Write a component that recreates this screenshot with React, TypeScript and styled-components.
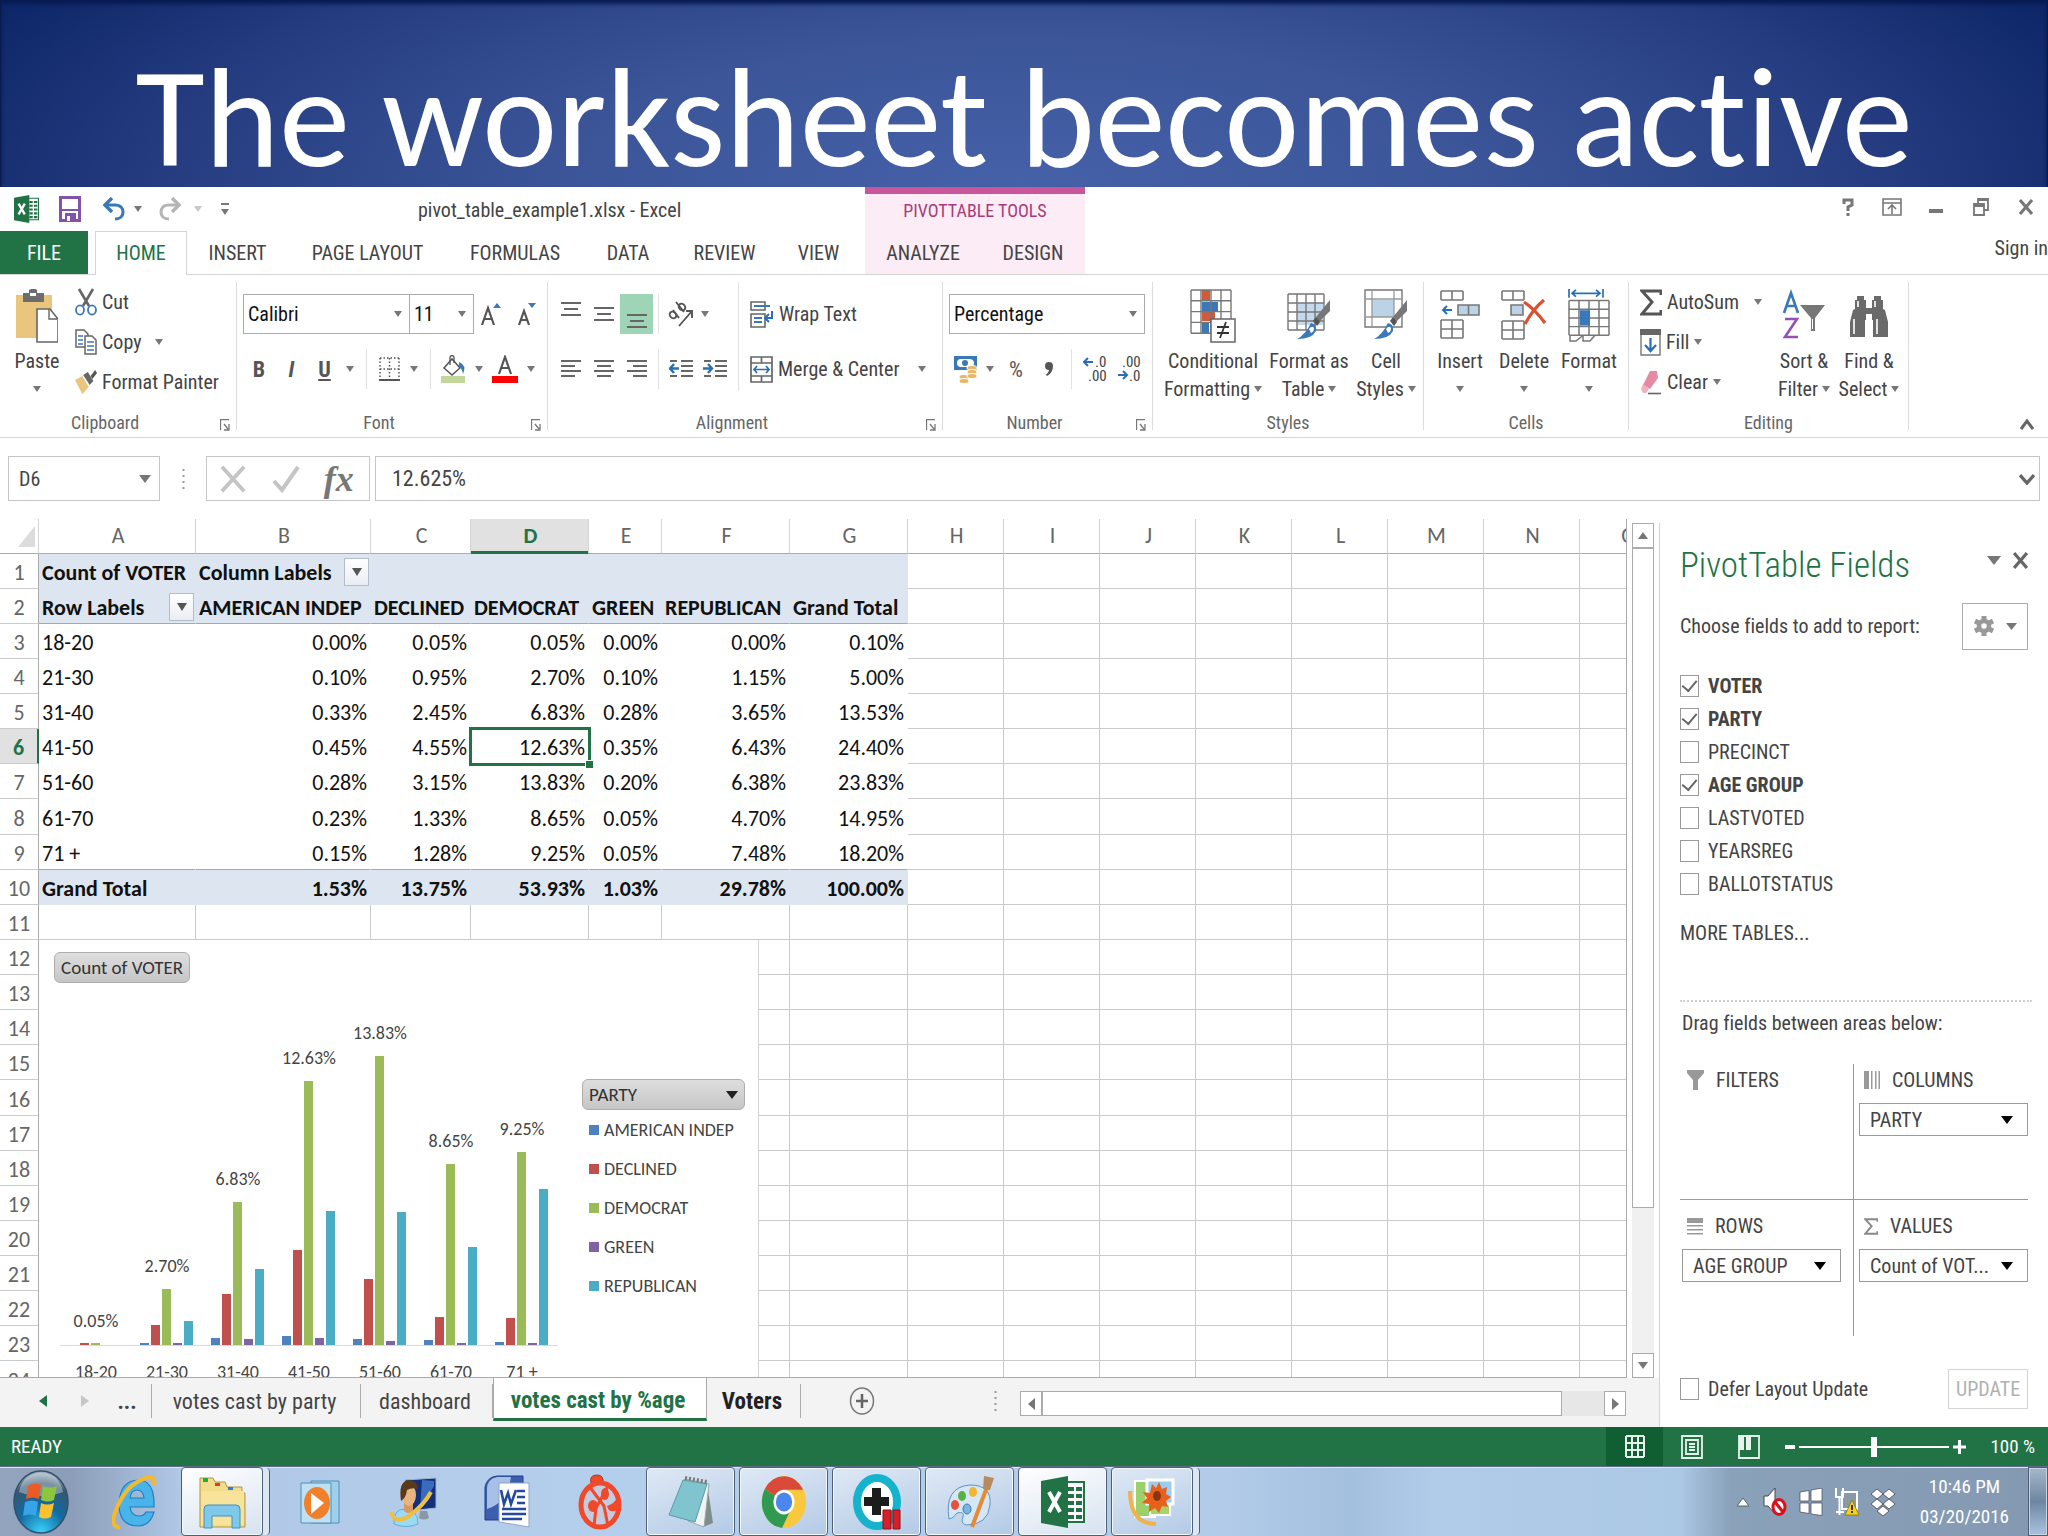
import React from "react";
import styled, { createGlobalStyle, css } from "styled-components";

const UI = `"Roboto Condensed", "Open Sans", "Noto Sans", sans-serif`;
const CAL = `Carlito, Lato, sans-serif`;
const GREEN = "#217346";
const GRAY = "#777";
const LINE = "#d4d4d4";
const GRID = "#cbcacd";

const Global = createGlobalStyle`
  * { box-sizing: border-box; }
  body { margin: 0; background: #fff; font-family: ${UI}; font-size: 20px; color: #444; overflow: hidden; font-variant-ligatures: none; }
  button, select, input { font: inherit; color: inherit; }
  button { background: none; border: 0; padding: 0; }
  svg { display: block; flex: none; }
`;

/* ---------- shell ---------- */
const Page = styled.div`
  display: flex; flex-direction: column; height: 100vh; min-height: 1000px;
`;
const Banner = styled.h1`
  margin: 0; padding: 49px 0 0; flex: none; text-align: center;
  font: 400 142px/138px ${CAL}; font-variant-ligatures: none; color: #fff; white-space: nowrap;
  border: solid #0a1a4c; border-width: 0 1px; box-shadow: inset 0 4px 4px #071a52;
  background: radial-gradient(ellipse 56% 200% at 50% 100%, #4561a8 0, #3c5599 40%, #253d80 75%, #0e2768 100%);
`;
const TitleBar = styled.header`
  display: grid; grid-template-columns: 418px 447px 220px 1fr; height: 44px; flex: none;
`;
const Quick = styled.div`
  display: flex; align-items: center; padding: 0 0 3px 12px;
`;
const IconButton = styled.button<{ $w?: number }>`
  display: flex; align-items: center; justify-content: center; width: ${p => p.$w ?? 24}px; height: 30px;
`;
const DocTitle = styled.div`line-height: 46px; font-size: 20px;`;
const ToolsLabel = styled.div`
  background: #fcecf5; border-top: 7px solid #c9559a; color: #a83c7a; text-align: center; line-height: 34px; font-size: 18px;
`;
const WinButtons = styled.div`
  display: flex; align-items: center; justify-content: flex-end; gap: 20px; padding: 0 12px 6px 0;
`;
const TabRow = styled.nav`
  display: flex; height: 44px; flex: none; border-bottom: 1px solid ${LINE};
`;
const Tab = styled.button<{ $w: number; $kind?: "file" | "on" | "tool" }>`
  width: ${p => p.$w}px; line-height: 43px; height: 44px; font-size: 20px; flex: none; border: 1px solid transparent; border-width: 1px 1px 0;
  ${p => p.$kind === "file" && css`background: ${GREEN}; color: #fff; margin-right: 7px; height: 43px;`}
  ${p => p.$kind === "on" && css`background: #fff; color: ${GREEN}; border-color: ${LINE};`}
  ${p => p.$kind === "tool" && css`background: #fcecf5; height: 43px;`}
`;
const SignIn = styled.a`
  margin-left: auto; color: #444; text-decoration: none; line-height: 34px; white-space: nowrap;
`;

/* ---------- ribbon ---------- */
const Ribbon = styled.div`
  display: flex; flex: none; padding: 7px 0; border-bottom: 1px solid ${LINE}; border-top: 0;
`;
const Group = styled.section<{ $w: number }>`
  width: ${p => p.$w}px; flex: none; display: flex; flex-direction: column; border-right: 1px solid #dcdcdc;
`;
const GroupBody = styled.div<{ $pad?: number }>`
  height: 134px; display: flex; padding-left: ${p => p.$pad ?? 0}px;
`;
const GroupName = styled.div<{ $launch?: boolean }>`
  position: relative; text-align: center; line-height: 14px; height: 14px; font-size: 18px; color: #666;
  padding-right: ${p => (p.$launch ? 26 : 0)}px;
  svg { position: absolute; right: 6px; top: 3px; }
`;
const Rows = styled.div<{ $w?: number; $rule?: boolean }>`
  display: flex; flex-direction: column; gap: 15px; padding-top: 12px; flex: none;
  ${p => p.$w && `width: ${p.$w}px;`}
  ${p => p.$rule && "border-right: 1px solid #e1e1e1; margin-bottom: 25px;"}
`;
const ToolRow = styled.div`
  display: flex; align-items: center; height: 40px; padding-left: 6px;
`;
const Tool = styled.button<{ $w: number; $on?: boolean }>`
  width: ${p => p.$w}px; height: 40px; flex: none; display: flex; align-items: center; justify-content: center;
  font-size: 22px; color: #555; background: ${p => (p.$on ? "#9fd5b7" : "none")};
`;
const Rule = styled.i<{ $w: number }>`
  width: ${p => p.$w}px; height: 40px; flex: none;
  background: linear-gradient(#e1e1e1, #e1e1e1) center / 1px 100% no-repeat;
`;
const Stack = styled.div<{ $w: number }>`width: ${p => p.$w}px; flex: none; display: flex; flex-direction: column;`;
const Line = styled.button<{ $gap?: number; $pad?: number }>`
  display: flex; align-items: center; gap: 5px; height: 40px; font-size: 20px; white-space: nowrap;
  padding-left: ${p => p.$pad ?? 0}px;
  svg:last-child:not(:first-child) { margin-left: ${p => p.$gap ?? 0}px; }
`;
const Big = styled.button<{ $w: number }>`
  width: ${p => p.$w}px; flex: none; height: 121px; padding-top: 7px; display: flex; flex-direction: column; align-items: center;
  line-height: 28px; font-size: 20px; white-space: nowrap; margin-right: 4px;
  & > svg { margin-bottom: 4px; }
  span { display: flex; align-items: center; gap: 4px; height: 28px; }
`;
const Combo = styled.label<{ $w: number }>`
  width: ${p => p.$w}px; height: 40px; flex: none; display: grid; align-items: center; border: 1px solid #ababab; margin-right: -1px;
  select { grid-area: 1 / 1; appearance: none; border: 0; background: none; outline: 0; width: 100%; height: 38px; padding: 0 4px; color: #111; font-size: 20px; }
  svg { grid-area: 1 / 1; justify-self: end; margin-right: 7px; pointer-events: none; }
`;
const Collapse = styled.button`margin: auto 14px 0 auto;`;

/* ---------- formula bar ---------- */
const FormulaBar = styled.div`
  display: grid; grid-template-columns: 152px 46px 164px 1fr; padding: 18px 8px; flex: none; height: 81px;
`;
const NameBox = styled.label`
  border: 1px solid #c6c6c6; display: flex; align-items: center; padding-right: 8px;
  input { border: 0; outline: 0; width: 100%; min-width: 0; padding: 0 10px; background: none; }
`;
const Dots = styled.div`display: grid; place-items: center;`;
const FxBox = styled.div`
  border: 1px solid #c6c6c6; display: flex; align-items: center; justify-content: space-around; padding: 0 4px 0 0;
  button { display: grid; place-items: center; width: 40px; height: 40px; }
`;
const FxMark = styled.em`font: italic 700 36px/36px "Liberation Serif", serif; color: #777;`;
const Formula = styled(NameBox)`
  margin-left: 5px; padding-right: 4px;
  input { padding: 0 16px; font-size: 22px; }
`;

/* ---------- workbook ---------- */
const Work = styled.main`display: flex; flex: 1; min-height: 0;`;
const Left = styled.div`flex: 1; min-width: 0; display: flex; flex-direction: column;`;
const SheetRow = styled.div`display: flex; flex: 1; min-height: 0;`;
const Sheet = styled.div`
  flex: 1; min-width: 0; position: relative; overflow: hidden; border-right: 1px solid #ababab; border-bottom: 1px solid #ababab;
`;
const Grid = styled.table`
  table-layout: fixed; border-collapse: separate; border-spacing: 0; width: 1676px;
  font: 400 22px/30px ${CAL}; color: #111;
  th, td { padding: 4px 3px 0; height: 35px; white-space: nowrap; overflow: visible; border: solid ${GRID}; border-width: 0 1px 1px 0; text-align: right; }
  tbody tr:nth-child(8n) > * { height: 36px; }
  thead th { height: 35px; padding: 0 2px 0 4px; text-align: center; font-weight: 400; color: #666; border-color: ${LINE}; border-bottom-color: #ababab; }
  tbody th { font-weight: 400; color: #666; text-align: center; padding: 4px 0 0; border-right-color: #ababab; }
`;
const ColHead = styled.th<{ $on: boolean }>`
  ${p => p.$on && css`&&& { background: #e1e1e1; color: ${GREEN}; font-weight: 700; box-shadow: inset 0 -2px ${GREEN}; border-bottom-color: ${GREEN}; }`}
`;
const RowHead = styled.th<{ $on: boolean }>`
  ${p => p.$on && css`&&& { background: #e1e1e1; color: ${GREEN}; font-weight: 700; border-right: 2px solid ${GREEN}; }`}
`;
const Cell = styled.td<{ $pivot?: "head" | "body"; $left?: boolean; $edge?: boolean; $on?: boolean }>`
  ${p => p.$pivot && css`&&& { border-color: transparent; }`}
  ${p => p.$pivot === "head" && css`&&& { background: #dde6f0; font-weight: 700; border-color: #dde6f0; }`}
  ${p => p.$edge && css`&&& { border-bottom-color: #8fadd3; }`}
  ${p => p.$left && css`&&& { text-align: left; }`}
  ${p => p.$on && css`&&& { position: relative; outline: 3px solid ${GREEN}; outline-offset: -1px; }`}
`;
const Handle = styled.i`
  position: absolute; right: -5px; bottom: -5px; width: 8px; height: 8px; background: ${GREEN}; border: solid #fff; border-width: 1px 0 0 1px;
`;
const WithFilter = styled.span`display: flex; justify-content: space-between; align-items: center;`;
const FilterButton = styled.button`
  width: 25px; height: 28px; display: grid; place-items: center; border: 1px solid #b4bccb; background: linear-gradient(#fff, #e9edf3); margin: -2px -2px 0 0;
`;
const ChartBox = styled.div`
  position: absolute; left: 39px; top: 421px; width: 720px; height: 460px; background: #fff; border-right: 1px solid ${LINE}; color: #444; font: 400 18px ${CAL};
`;
const ChartButton = styled.button`
  display: flex; align-items: center; justify-content: space-between; height: 31px; padding: 0 6px; border: 1px solid #adadad; border-radius: 6px;
  background: linear-gradient(#dedede, #c6c6c6); font: 400 19px ${CAL}; color: #333; white-space: nowrap;
`;
const ChartCorner = styled.div`position: absolute; left: 15px; top: 12px;`;
const Legend = styled.div`
  position: absolute; left: 543px; top: 139px; width: 163px;
  button { width: 100%; }
  ul { list-style: none; margin: 0; padding: 0 0 0 7px; }
  li { display: flex; align-items: center; gap: 5px; height: 39px; font-size: 18px; white-space: nowrap; }
`;
const Key = styled.i<{ $c: string }>`width: 10px; height: 10px; background: ${p => p.$c};`;
const Plot = styled.svg`position: absolute; left: 0; top: 0;`;
const VScroll = styled.div`
  width: 22px; margin: 4px 5px 0; display: flex; flex-direction: column; background: #f0f0f0;
`;
const ScrollButton = styled.button`
  border: 1px solid #ababab; background: #fff; display: grid; place-items: center; width: 22px; height: 25px; flex: none;
`;
const VThumb = styled.div`background: #fff; border: 1px solid #ababab; flex: 660 0 0;`;
const VRest = styled.div`flex: 145 0 0;`;

const SheetTabs = styled.div`
  display: flex; flex: none; height: 49px; background: #f4f3f4; padding-right: 33px; font-size: 22px;
`;
const NavButton = styled.button<{ $w: number; $pad?: number }>`
  width: ${p => p.$w}px; display: grid; place-items: center; color: ${GREEN}; height: 46px; flex: none; padding-left: ${p => p.$pad ?? 0}px;
`;
const SheetTab = styled.button<{ $w: number; $on?: boolean; $bold?: boolean }>`
  width: ${p => p.$w}px; height: 43px; flex: none; font-size: 22px; white-space: nowrap; padding: 3px 4px 0 0;
  background: linear-gradient(#ababab, #ababab) right 6px / 1px 34px no-repeat;
  ${p => p.$bold && css`font-weight: 700; color: #222; font-size: 23px;`}
  ${p => p.$on && css`background: #fff; color: ${GREEN}; font-weight: 700; font-size: 23px; padding-top: 6px; border-bottom: 3px solid ${GREEN}; margin-top: -1px; height: 44px; border-left: 1px solid #ababab; border-right: 1px solid #ababab;`}
`;
const HScroll = styled.div`
  flex: 1; display: flex; height: 25px; margin-top: 13px; background: #e8e7e8; 
`;
const HThumb = styled.div`background: #fff; border: 1px solid #ababab; flex: 521 0 0;`;
const HRest = styled.div`flex: 42 0 0;`;

/* ---------- pane ---------- */
const Pane = styled.aside`
  width: 389px; flex: none; margin-top: 4px; border-left: 1px solid ${LINE}; padding: 0 20px; display: flex; flex-direction: column; font-size: 20px;
`;
const PaneHead = styled.div`
  display: flex; align-items: center; height: 46px; margin-top: 20px; gap: 12px;
  h2 { margin: 0 auto 0 0; font: 300 35px/46px ${UI}; color: ${GREEN}; }
  svg { margin-bottom: 12px; }
`;
const PaneLine = styled.div`display: flex; align-items: center; justify-content: space-between; height: 48px; margin-top: 13px;`;
const GearButton = styled.button`
  border: 1px solid #ababab; width: 66px; height: 47px; display: flex; align-items: center; justify-content: center; gap: 12px;
`;
const Fields = styled.div`display: flex; flex-direction: column; margin-top: 19px;`;
const Check = styled.label<{ $bold?: boolean }>`
  display: flex; align-items: center; gap: 9px; height: 33px; font-weight: ${p => (p.$bold ? 700 : 400)};
  input { appearance: none; margin: 0; width: 19px; height: 22px; border: 1px solid #9a9a9a; background: #fff; flex: none; display: grid; place-items: center; }
  input:checked::before { content: ""; width: 7px; height: 12px; border: solid #666; border-width: 0 2px 2px 0; transform: rotate(40deg); margin-top: -4px; }
`;
const More = styled.a`color: #444; text-decoration: none; line-height: 30px; margin-top: 18px;`;
const Drag = styled.div`border-top: 2px dotted #d0d0d0; margin: 52px -4px 0 0; padding: 7px 2px 0; line-height: 28px;`;
const Areas = styled.div`
  display: grid; grid-template-columns: 174px 1fr; grid-template-rows: 136px 136px; margin: 27px 0 0 0;
`;
const Area = styled.div<{ $r?: boolean; $b?: boolean }>`
  border: solid #9a9a9a; border-width: 0 ${p => (p.$r ? 1 : 0)}px ${p => (p.$b ? 1 : 0)}px 0;
  padding: ${p => (p.$b ? 0 : 10)}px ${p => (p.$r ? 12 : 0)}px 0 ${p => (p.$r ? 2 : 5)}px;
`;
const AreaName = styled.div`display: flex; align-items: center; gap: 12px; height: 32px; padding-left: 5px; margin-bottom: 7px;`;
const Pill = styled.button`
  width: 100%; height: 33px; border: 1px solid #9a9a9a; background: #fff; display: flex; align-items: center; justify-content: space-between; padding: 0 14px 0 10px; white-space: nowrap;
`;
const PaneFoot = styled.div`display: flex; align-items: center; justify-content: space-between; margin: auto 0 18px;`;
const Update = styled.button`border: 1px solid ${LINE}; color: #b1b1b1; width: 80px; height: 40px;`;

/* ---------- status bar ---------- */
const Status = styled.footer`
  display: flex; align-items: center; height: 39px; flex: none; background: ${GREEN}; color: #fff; padding: 0 13px 0 11px; font-size: 19px;
`;
const Views = styled.div`margin-left: auto; display: flex;`;
const View = styled.button<{ $on?: boolean }>`
  width: 57px; height: 39px; display: grid; place-items: center; background: ${p => (p.$on ? "#0f5f32" : "none")};
`;
const Zoom = styled.label`
  display: flex; align-items: center; gap: 4px; margin: 0 24px 0 8px;
  input { appearance: none; width: 150px; height: 20px; margin: 0; background: linear-gradient(#fff, #fff) center / 100% 2px no-repeat; }
  input::-webkit-slider-thumb { appearance: none; width: 6px; height: 20px; background: #fff; }
`;

/* ---------- taskbar ---------- */
const Taskbar = styled.div`
  display: flex; height: 70px; flex: none; border-top: 1px solid #5e6d84; box-shadow: inset 0 1px #dbe7f4;
  background: linear-gradient(90deg, #93a5bf 0, #8b9db8 70px, #b0c8e6 180px, #b4cfec 30%, #b1cbe8 60%, #a4c0df 66%, #b0cce9 70%, #abc8e4 1680px, #8aa1ba 1730px, #8499b1 100%);
`;
const Start = styled.button`width: 82px; display: grid; place-items: center; margin-right: 6px;`;
const TaskButton = styled.button<{ $run?: boolean; $hot?: boolean; $pile?: boolean }>`
  width: 93px; display: grid; place-items: center; position: relative;
  ${p => p.$run && css`
    width: 89px; margin-right: 4px; border: 1px solid #4f6076; border-radius: 4px; box-shadow: inset 0 0 0 1px #f3f8fd;
    background: linear-gradient(160deg, ${p.$hot ? "#fff" : "#dfe9f5"}, ${p.$hot ? "#d5e2f0" : "#b3cae6"});`}
  ${p => p.$pile && css`
    width: 82px; margin-right: 11px;
    &::after { content: ""; position: absolute; right: -8px; top: 0; bottom: 0; width: 6px; border-right: 1px solid #4f6076; border-radius: 0 4px 4px 0; background: #dce7f4; }`}
`;
const Tray = styled.div`
  margin-left: auto; display: flex; align-items: center; gap: 12px;
`;
const Clock = styled.time`color: #fff; text-align: center; line-height: 30px; font-size: 19px; padding: 0 7px 0 13px;`;
const Peek = styled.button`width: 20px; align-self: stretch; border: 1px solid #4f6076; box-shadow: inset 0 0 0 1px #c5d3e2; background: linear-gradient(#a6b7ca, #6f86a1 50%, #a9c3df);`;

/* ---------- drawings ---------- */
const Ic = ({ w, h, vb, children }: { w: number; h: number; vb?: string; children: React.ReactNode }) => (
  <svg width={w} height={h} viewBox={vb ?? `0 0 ${w} ${h}`} preserveAspectRatio="none" fill="none" aria-hidden="true">{children}</svg>
);
const Caret = ({ c = GRAY, w = 8, h = 6 }: { c?: string; w?: number; h?: number }) => (
  <Ic w={w} h={h} vb="0 0 8 6"><path d="M0 0h8L4 6z" fill={c} /></Ic>
);
const Launcher = () => <Ic w={10} h={12}><path d="M.5 11V.5H9M4 5l4 5M9 5v6H4" stroke={GRAY} strokeWidth="1.3" /></Ic>;
const bars = (rows: [number, number, number][], c = "#666") => rows.map(([x, y, w], i) => <path key={i} d={`M${x} ${y}h${w}`} stroke={c} strokeWidth="2" />);

const ExcelLogo = ({ w, h }: { w: number; h: number }) => (
  <Ic w={w} h={h} vb="0 0 44 52">
    <path d="M24 6h19v40H24z" fill="#fff" stroke={GREEN} strokeWidth="2" />
    <path d="M27 11h6v4h-6zM35 11h6v4h-6zM27 18h6v4h-6zM35 18h6v4h-6zM27 25h6v4h-6zM35 25h6v4h-6zM27 32h6v4h-6zM35 32h6v4h-6zM27 39h6v4h-6zM35 39h6v4h-6z" fill={GREEN} />
    <path d="M0 5L27 0v52L0 47z" fill={GREEN} />
    <path d="M8 16l11 20M19 16L8 36" stroke="#fff" strokeWidth="4" />
  </Ic>
);
const SaveIcon = () => <Ic w={22} h={26}><path d="M1.5 1.5h19v23h-19z" stroke="#8552ab" strokeWidth="3" /><path d="M2 13h18v2H2zM6 17h11v8H6z" fill="#8552ab" /><path d="M8 20h3v5H8z" fill="#fff" /></Ic>;
const UndoIcon = ({ c, flip }: { c: string; flip?: boolean }) => (
  <Ic w={22} h={24}><g transform={flip ? "translate(22 0) scale(-1 1)" : undefined}><path d="M2 8h10c6 0 8 4 8 7 0 5-4 7-8 7" stroke={c} strokeWidth="3" /><path d="M9 1L2 8l7 7" stroke={c} strokeWidth="3.4" /></g></Ic>
);
const PasteIcon = () => (
  <Ic w={42} h={54}><path d="M0 6h36v43H0z" fill="#e9c57e" /><path d="M7 4h6V1q5-3 8 0v3h7v9H7z" fill="#6d6d6d" /><path d="M14 4h6v3h-6z" fill="#fff" /><path d="M21 20h13l8 10v23H21z" fill="#fff" stroke="#666" strokeWidth="1.6" /><path d="M33 20v10h8" stroke="#666" strokeWidth="1.4" /></Ic>
);
const CutIcon = () => <Ic w={22} h={28}><path d="M4 1l10 17M18 1L8 18" stroke="#666" strokeWidth="2.6" /><ellipse cx="5" cy="22" rx="4" ry="4.6" stroke="#3a78b8" strokeWidth="1.8" /><ellipse cx="17" cy="22" rx="4" ry="4.6" stroke="#3a78b8" strokeWidth="1.8" /></Ic>;
const CopyIcon = () => (
  <Ic w={22} h={26}><path d="M1 1h8l4 4v13H1z" fill="#fff" stroke="#666" strokeWidth="1.5" /><path d="M3 7h5M3 11h5M3 15h5" stroke="#3a78b8" strokeWidth="1.6" /><path d="M10 7h7l4 4v14H10z" fill="#fff" stroke="#666" strokeWidth="1.5" /><path d="M12 13h7M12 17h7M12 21h7" stroke="#3a78b8" strokeWidth="1.6" /></Ic>
);
const BrushIcon = () => <Ic w={22} h={25} vb="0 0 24 25"><path d="M0 10l8-4 7 11-7 7z" fill="#e9c57e" /><path d="M9 5l5-3 6 9-4 4z" fill="#666" /><path d="M17 6l5-6 2 3-5 6z" fill="#555" /></Ic>;
const BordersIcon = () => <Ic w={21} h={24}><path d="M1 1h19M1 12h19M1 1v20M10.500 1v20M20 1v20" stroke="#555" strokeWidth="1.500" strokeDasharray="1.500 2" /><path d="M0 23h21" stroke="#555" strokeWidth="2" /></Ic>;
const BucketIcon = () => <Ic w={26} h={28}><path d="M0 21h24v7H0z" fill="#c3d69b" /><path d="M3 13l8-9 8 9-8 7z" fill="#fff" stroke="#555" strokeWidth="1.500" /><path d="M9 10V2q2-3 4 0v6" stroke="#555" strokeWidth="1.300" /><path d="M18 7q8 3 4 12-1-6-4-7z" fill="#3a78b8" /></Ic>;
const FontColor = () => <Ic w={26} h={28}><path d="M0 21h26v7H0z" fill="#f00" /><path d="M7 19l6-17 6 17M9 13h8" stroke="#555" strokeWidth="2.200" /></Ic>;
const SizeIcon = ({ down }: { down?: boolean }) => (
  <Ic w={22} h={26}><path d={down ? "M4 24l5-14 5 14M6 19h6" : "M2 24L8 7l6 17M4 18h8"} stroke="#555" strokeWidth="2.200" /><path d={down ? "M13 2h8l-4 5z" : "M13 7h8l-4-5z"} fill="#3a78b8" /></Ic>
);
const AngleIcon = () => <Ic w={26} h={28}><g stroke="#555" strokeWidth="1.900"><ellipse cx="5" cy="15" rx="3" ry="3.600" transform="rotate(-45 5 15)" /><path d="M5 10l6 8M8 2l8 10" /><ellipse cx="14" cy="7" rx="3" ry="3.600" transform="rotate(-45 14 7)" /><path d="M11 26L24 11M24 18v-7h-6" /></g></Ic>;
const IndentIcon = ({ right }: { right?: boolean }) => (
  <Ic w={24} h={20}>{bars([[1, 2, 7], [12, 2, 12], [12, 7, 12], [12, 12, 12], [1, 17, 7], [12, 17, 12]])}<path d={right ? "M0 9.500h9M5 5l4 4.500L5 14" : "M10 9.500H1M5 5L1 9.500 5 14"} stroke="#2a6fb5" strokeWidth="2.400" /></Ic>
);
const WrapIcon = () => <Ic w={24} h={27}><path d="M1 1h14v8H1zM1 13h14v13H1z" stroke="#666" strokeWidth="1.600" /><path d="M4 5h16M4 17h8M4 21h8" stroke="#3a78b8" strokeWidth="1.800" /><path d="M22 10v7h-6M19 13l-4 4 4 4" stroke="#2a6fb5" strokeWidth="2" /></Ic>;
const MergeIcon = () => <Ic w={23} h={27}><path d="M1 1h21v25H1zM1 7h21M1 20h21M11.500 1v6M11.500 20v6" stroke="#666" strokeWidth="1.700" /><path d="M4 13.500h15M7 10l-3 3.500L7 17M16 10l3 3.500-3 3.500" stroke="#2a6fb5" strokeWidth="1.700" /></Ic>;
const MoneyIcon = () => <Ic w={26} h={29}><path d="M1 1h23v14H1z" fill="#3a78b8" /><path d="M4 8q0-4 4-4h8q5 0 5 4t-5 4H8q-4 0-4-4z" fill="#fff" /><circle cx="12" cy="8" r="3" fill="#3a78b8" /><g fill="#e9b765" stroke="#fff"><ellipse cx="19" cy="13" rx="5" ry="2.500" /><ellipse cx="19" cy="17" rx="5" ry="2.500" /><ellipse cx="11" cy="22" rx="5" ry="2.500" /><ellipse cx="19" cy="21" rx="5" ry="2.500" /><ellipse cx="11" cy="26" rx="5" ry="2.500" /></g></Ic>;
const Decimal = ({ more }: { more?: boolean }) => (
  <svg width="24" height="28" viewBox="0 0 24 28" fill="#444" fontFamily={UI} fontSize="15" aria-hidden="true">
    <text x={more ? 12 : 5} y="12">{more ? ".0" : ".00"}</text><text x={more ? 5 : 12} y="26">{more ? ".00" : ".0"}</text>
    <path d={more ? "M10 7H1M5 3L1 7l4 4" : "M1 20h9M6 16l4 4-4 4"} fill="none" stroke="#2a6fb5" strokeWidth="2" />
  </svg>
);
const gridPath = (x: number, y: number, cw: number, ch: number, c: number, r: number) => {
  let d = "";
  for (let i = 0; i <= c; i++) d += `M${x + i * cw} ${y}v${ch * r}`;
  for (let j = 0; j <= r; j++) d += `M${x} ${y + j * ch}h${cw * c}`;
  return d;
};
const CondIcon = () => (
  <Ic w={46} h={54}><path d="M1 1h40v43H1z" fill="#fff" /><path d="M12 1h8v11h-8zM12 23h13v9H12z" fill="#d05b3b" /><path d="M12 13h16v9H12zM12 34h7v10h-7z" fill="#3a78b8" /><path d={gridPath(1, 1, 10, 10.8, 4, 4)} stroke="#777" strokeWidth="1.400" /><path d="M21 30h24v23H21z" fill="#fff" stroke="#666" strokeWidth="1.500" /><path d="M27 38h12M27 44h12M36 33l-6 16" stroke="#333" strokeWidth="1.800" /></Ic>
);
const brush = <><path d="M43 11v11L32 33l-3-5z" fill="#777" /><path d="M29 28l4 5-3 4-4-5z" fill="#555" /><path d="M24 34q6 1 5 8-4 8-19 8 8-4 14-16z" fill="#3a78b8" /><path d="M22 40q3-4 5-1 0 4-3 5z" fill="#fff" /></>;
const TableIcon = () => <Ic w={44} h={54}><path d="M10 14h26v22H10z" fill="#c5d9ee" /><path d={gridPath(1, 5, 9, 9, 4, 4)} stroke="#777" strokeWidth="1.400" />{brush}</Ic>;
const StyleIcon = () => <Ic w={44} h={54}><path d="M1 1h37v37H1z" fill="#fff" stroke="#777" strokeWidth="1.400" /><path d="M8 11h22v17H8z" fill="#bcd3e6" /><path d="M8 1v37M30 1v27M1 10h37M1 28h28" stroke="#999" strokeWidth="1.300" />{brush}</Ic>;
const InsertIcon = () => <Ic w={40} h={54}><path d={gridPath(1, 2, 11, 9, 2, 1) + gridPath(1, 31, 11, 9, 2, 2)} stroke="#777" strokeWidth="1.600" /><path d="M18 16h21v10H18zM28.500 16v10" fill="#bcd3e6" stroke="#777" strokeWidth="1.600" /><path d="M12 21H3M7 17l-4 4 4 4" stroke="#2a6fb5" strokeWidth="2" /></Ic>;
const DeleteIcon = () => <Ic w={46} h={54}><path d={gridPath(1, 2, 11, 9, 2, 1) + gridPath(1, 32, 11, 9, 2, 2)} stroke="#777" strokeWidth="1.600" /><path d="M10 16h12v10H10z" fill="#bcd3e6" stroke="#777" strokeWidth="1.600" /><path d="M23 13q10 6 21 21M43 11Q32 20 24 35" stroke="#d8532e" strokeWidth="3.200" /></Ic>;
const FormatIcon = () => <Ic w={42} h={54} vb="0 0 42 56"><path d="M1 0v9M35 0v9M4 4.500h28M8 1L4 4.500 8 8M28 1l4 3.500L28 8" stroke="#2a6fb5" strokeWidth="1.700" /><path d={gridPath(1, 12, 10, 9, 4, 4)} stroke="#777" strokeWidth="1.500" /><path d="M12 22h10v16H12z" fill="#3a78b8" /><path d="M2 48v6h6l6-5M15 48v6h7l5-6" stroke="#777" strokeWidth="1.500" /></Ic>;
const SigmaIcon = ({ w = 22, h = 27, c = "#555" }: { w?: number; h?: number; c?: string }) => <Ic w={w} h={h} vb="0 0 22 27"><path d="M21 6V2H2l10 11L2 25h19v-4" stroke={c} strokeWidth="3" /></Ic>;
const FillIcon = () => <Ic w={21} h={27}><path d="M1 1h19v25H1z" fill="#fff" stroke="#777" strokeWidth="1.400" /><path d="M0 0h21v6H0z" fill="#666" /><path d="M10.500 9v13M5 16l5.500 6 5.500-6" stroke="#2a6fb5" strokeWidth="2.200" /></Ic>;
const ClearIcon = () => <Ic w={22} h={25}><path d="M10 1h7l1 7-8 11-7-4z" fill="#e58aa3" /><path d="M3 14l6 5-3 4H3l-2-4z" fill="#f2afc0" /><path d="M8 23.500h13" stroke="#666" strokeWidth="1.600" /></Ic>;
const SortIcon = () => <Ic w={44} h={54}><path d="M2 24L9 4l7 20M5 17h8" stroke="#3a78b8" strokeWidth="2.600" /><path d="M3 30h12L3 48h13" stroke="#9252b5" strokeWidth="2.600" /><path d="M18 16h25L33 29v13h-4V29z" fill="#777" /><path d="M30.500 30v10" stroke="#fff" /></Ic>;
const FindIcon = () => <Ic w={40} h={54} vb="0 -2 40 54"><path d="M8 5h7v4h2v20h-1v17H1V31l3-12 2-1V9h2zM25 5h7v4h2v9l2 1 3 12v15H24V29h-1V9h2z" fill="#6a6a6a" /><path d="M16 17h8v6h-8z" fill="#6a6a6a" /><path d="M5 28v15M28 28v15M9 10v6M26 10v6" stroke="#fff" strokeWidth="1.600" /></Ic>;
const GearIcon = () => <Ic w={20} h={22}><path d="M10 1v20M1 6l18 10M19 6L1 16" stroke="#999" strokeWidth="5" /><circle cx="10" cy="11" r="5" fill="#fff" stroke="#999" strokeWidth="4.500" /></Ic>;
const Cross = ({ c = "#666", s = 14, h = 16, t = 3 }: { c?: string; s?: number; h?: number; t?: number }) => <Ic w={s} h={h} vb="0 0 14 16"><path d="M1 1l12 14M13 1L1 15" stroke={c} strokeWidth={t} /></Ic>;

const StartOrb = () => (
  <Ic w={56} h={64}>
    <defs><radialGradient id="orb" cx=".5" cy="1" r="1"><stop offset="0" stopColor="#38d6ff" /><stop offset=".45" stopColor="#136a9f" /><stop offset=".8" stopColor="#365670" /><stop offset="1" stopColor="#a9bccb" /></radialGradient></defs>
    <ellipse cx="28" cy="32" rx="27" ry="31" fill="url(#orb)" stroke="#35506c" strokeWidth="1.500" />
    <path d="M6 22Q10 3 28 3t22 19q-22 8-44 0z" fill="#fff" opacity=".35" />
    <path d="M15 16q6-4 13-1l-2 14q-6-3-13 0z" fill="#ee5a24" /><path d="M30 16q7 3 14 0l-3 14q-6 3-13 0z" fill="#8cc63e" />
    <path d="M12 32q7-3 13 0l-2 14q-6-3-13 0z" fill="#38a3e8" /><path d="M28 33q6 3 13 0l-3 14q-6 3-12 0z" fill="#fbc02d" />
  </Ic>
);
const IeIcon = () => <Ic w={46} h={56}><path d="M42 33H18q1 9 9 9 5 0 7-4h8q-4 14-16 14Q7 52 7 30 8 6 27 6q16 1 15 27zM18 24h14q-1-8-7-8t-7 8z" fill="#49b4ea" stroke="#1d7fc4" strokeWidth="1.200" fillRule="evenodd" /><path d="M8 54Q-3 52 4 36 14 10 34 4q10-3 8 7" stroke="#f4b92c" strokeWidth="4" /></Ic>;
const FolderIcon = () => <Ic w={50} h={54}><path d="M3 8V3h13l2 4h10l2 5h15v6h3v34H3z" fill="#f3dc8c" stroke="#b9933c" /><path d="M6 3h5v4H6z" fill="#1fae3a" /><path d="M18 8h5v3h-5z" fill="#e03a2c" /><path d="M31 12h5v3h-5z" fill="#2d7fd6" /><path d="M4 16h43v34H4z" fill="#f7e39a" /><path d="M7 53V34q0-4 4-4h28q4 0 4 4v19h-8V41H15v12z" fill="#7fc8ea" stroke="#3c93c2" /></Ic>;
const PlayIcon = () => <Ic w={44} h={48}><path d="M12 3h28v42H12z" fill="#9fd0ea" stroke="#4a90b8" /><path d="M2 5h30v40H2z" fill="#bfe0f2" stroke="#4a90b8" /><ellipse cx="18" cy="25" rx="13" ry="16" fill="#f0812a" /><path d="M12 15l13 10-13 11z" fill="#fff" /></Ic>;
const PersonIcon = () => <Ic w={48} h={50}><path d="M15 3l31-2v30l-27 3z" fill="#12307c" stroke="#9fb4d0" /><path d="M30 33l14-24v-5L32 3z" fill="#4a86d8" opacity=".7" /><path d="M30 34h7l2 7q-6 3-10 0z" fill="#8c97a5" /><path d="M4 47q-1-15 11-15 13 0 13 15-12 5-24 0z" fill="#9adbf2" stroke="#5fb0d4" /><path d="M14 26h9v8q-5 4-9 0z" fill="#d79a62" /><ellipse cx="19" cy="18" rx="7" ry="11" fill="#e8b580" /><path d="M11 24Q8 4 19 3q9 1 9 9-6-2-11 1-1 8-6 11z" fill="#5b3a1c" /><path d="M1 35q4 13 18 4Q34 28 41 15" stroke="#f0bf3f" strokeWidth="4" /></Ic>;
const WordIcon = () => <Ic w={48} h={54}><path d="M2 12Q4 2 14 1h26v44H2z" fill="#3b5fae" stroke="#233f88" /><path d="M4 34Q24 28 28 2H14Q4 4 4 14z" fill="#a8bfe8" /><path d="M16 8h30v44l-30-5z" fill="#fff" stroke="#8fa3c8" /><path d="M18 15l3 14 4-11 3 11 5-14" stroke="#244a9c" strokeWidth="2.600" /><path d="M34 16h8M34 22h8M34 28h8M19 34h24M19 39h24M19 44h20" stroke="#244a9c" strokeWidth="2.400" /></Ic>;
const RedIcon = () => <Ic w={46} h={56}><path d="M14 9q-2-8 6-8 7 0 6 8z" fill="#f0492a" stroke="#a93a2c" /><ellipse cx="23" cy="31" rx="19" ry="22" fill="#c3cbe0" stroke="#f0492a" strokeWidth="5" /><path d="M12 12l15 20 4 20M31 12L19 34l-2 18" stroke="#f0492a" strokeWidth="3" /><ellipse cx="16" cy="32" rx="5" ry="6" fill="#f0492a" /><ellipse cx="28" cy="20" rx="4" ry="6" fill="#f0492a" /><path d="M30 32q8-3 10-8v12q-8 4-10-4z" fill="#f0492a" /></Ic>;
const NoteIcon = () => <Ic w={48} h={54}><path d="M40 8l6 40-10 4z" fill="#7e8c8c" /><path d="M18 4l24 5-5 43-16-6z" fill="#eef4f4" stroke="#9aa" /><path d="M16 5l24 4L28 47 2 40z" fill="#7fc4cf" stroke="#5a9aa5" /><path d="M18 3l22 4" stroke="#777" strokeWidth="4" strokeDasharray="2 2" /></Ic>;
const ChromeIcon = () => <Ic w={46} h={54} vb="0 0 48 48"><circle cx="24" cy="24" r="23" fill="#f9c83c" /><path d="M24 24L4 12.500A23 23 0 0 1 44 13z" fill="#d94a3b" /><path d="M4 12.500A23 23 0 0 0 22 47l10-18-8-5z" fill="#2f9a50" /><path d="M24 13h20L34 29z" fill="#f9c83c" /><circle cx="24" cy="24" r="11" fill="#fff" /><circle cx="24" cy="24" r="8.500" fill="#4a86ee" /></Ic>;
const PlusApp = () => <Ic w={48} h={56}><ellipse cx="24" cy="28" rx="20" ry="24" fill="#fff" stroke="#16b4cc" strokeWidth="8" /><path d="M19 14h9v9h8v9h-8v9h-9v-9h-8v-9h8z" fill="#1c1c1c" /><path d="M30 36h8v19h-8zM40 36h7v19h-7z" fill="#d5202a" stroke="#8c1018" /></Ic>;
const PaintIcon = () => <Ic w={48} h={54}><path d="M3 44Q-2 12 24 10q22 0 20 20-2 20-24 20-6-2-3-8 2-6-6-4-4 6-8 6z" fill="#d4e7f6" stroke="#5c93c0" /><ellipse cx="9" cy="30" rx="4" ry="5" fill="#e4523c" /><ellipse cx="16" cy="21" rx="4" ry="5" fill="#57b146" /><ellipse cx="27" cy="17" rx="4" ry="5" fill="#f2b632" /><ellipse cx="21" cy="34" rx="4" ry="5" fill="#7fb4e2" stroke="#3f78b0" /><path d="M41 12L26 52" stroke="#e58a32" strokeWidth="4" /><path d="M37 14L38 1l10 2-4 12z" fill="#b98a5c" /></Ic>;
const PhotoIcon = () => <Ic w={48} h={54}><path d="M7 6h20v36H7z" fill="#9bd06a" stroke="#fff" strokeWidth="2" /><path d="M22 24h20v16H22z" fill="#a6d46a" stroke="#fff" strokeWidth="2" /><path d="M19 5h26v24H19z" fill="#9cccf0" stroke="#fff" strokeWidth="3" /><path d="M24 9l4 4 3-6 3 7 5-2-1 7 5 3-5 4 2 6-6-1-3 7-4-5-6 4v-8l-7-1 5-5-4-6 7 1z" fill="#e8601a" /><ellipse cx="29" cy="21" rx="4" ry="5" fill="#8a3510" /><path d="M2 16q0 33 26 33" stroke="#f0b24a" strokeWidth="4" /></Ic>;

/* ---------- data ---------- */
const COLS: [string, number][] = [["A", 157], ["B", 175], ["C", 100], ["D", 118], ["E", 73], ["F", 128], ["G", 118], ["H", 96], ["I", 96], ["J", 96], ["K", 96], ["L", 96], ["M", 96], ["N", 96], ["O", 96]];
const PIVOT: string[][] = [
  ["Count of VOTER", "Column Labels", "", "", "", "", ""],
  ["Row Labels", "AMERICAN INDEP", "DECLINED", "DEMOCRAT", "GREEN", "REPUBLICAN", "Grand Total"],
  ["18-20", "0.00%", "0.05%", "0.05%", "0.00%", "0.00%", "0.10%"],
  ["21-30", "0.10%", "0.95%", "2.70%", "0.10%", "1.15%", "5.00%"],
  ["31-40", "0.33%", "2.45%", "6.83%", "0.28%", "3.65%", "13.53%"],
  ["41-50", "0.45%", "4.55%", "12.63%", "0.35%", "6.43%", "24.40%"],
  ["51-60", "0.28%", "3.15%", "13.83%", "0.20%", "6.38%", "23.83%"],
  ["61-70", "0.23%", "1.33%", "8.65%", "0.05%", "4.70%", "14.95%"],
  ["71 +", "0.15%", "1.28%", "9.25%", "0.05%", "7.48%", "18.20%"],
  ["Grand Total", "1.53%", "13.75%", "53.93%", "1.03%", "29.78%", "100.00%"],
];
const PARTY: [string, string][] = [["AMERICAN INDEP", "#4f81bd"], ["DECLINED", "#c0504d"], ["DEMOCRAT", "#9bbb59"], ["GREEN", "#8064a2"], ["REPUBLICAN", "#4bacc6"]];
const FIELDS: [string, boolean][] = [["VOTER", true], ["PARTY", true], ["PRECINCT", false], ["AGE GROUP", true], ["LASTVOTED", false], ["YEARSREG", false], ["BALLOTSTATUS", false]];

const Chart = () => {
  const base = 405;
  return (
    <ChartBox>
      <Plot width="520" height="440" fontFamily={CAL} fontSize="18" fill="#444" textAnchor="middle">
        <path d={`M21 ${base + 0.5}h498`} stroke="#d9d9d9" />
        {PIVOT.slice(2, 9).map((r, g) => {
          const cx = 57 + g * 71;
          return (
            <g key={r[0]}>
              {PARTY.map(([name, c], i) => {
                const v = parseFloat(r[i + 1]);
                const h = v === 0 ? 0 : Math.max(2, Math.round(v * 20.9));
                return <rect key={name} x={cx - 27 + i * 11} y={base - h} width="9" height={h} fill={c} />;
              })}
              <text x={cx} y={base - Math.round(parseFloat(r[3]) * 20.9) - 17}>{r[3]}</text>
              <text x={cx} y={base + 33}>{r[0]}</text>
            </g>
          );
        })}
      </Plot>
      <ChartCorner><ChartButton>Count of VOTER</ChartButton></ChartCorner>
      <Legend>
        <ChartButton>PARTY<Caret c="#222" w={12} h={8} /></ChartButton>
        <ul>{PARTY.map(([n, c]) => <li key={n}><Key $c={c} />{n}</li>)}</ul>
      </Legend>
    </ChartBox>
  );
};

const SheetGrid = () => (
  <Grid>
    <colgroup><col style={{ width: 39 }} />{COLS.map(([n, w]) => <col key={n} style={{ width: w }} />)}</colgroup>
    <thead>
      <tr>
        <th><Ic w={32} h={26}><path d="M31 3v21H14z" fill="#dcdcdc" /></Ic></th>
        {COLS.map(([n]) => <ColHead key={n} $on={n === "D"}>{n}</ColHead>)}
      </tr>
    </thead>
    <tbody>
      {Array.from({ length: 24 }, (_, r) => (
        <tr key={r}>
          <RowHead $on={r === 5}>{r + 1}</RowHead>
          {COLS.map(([n], c) => {
            if (r > 9 || c > 6) return <Cell key={n} />;
            const text = PIVOT[r][c];
            const head = r < 2 || r === 9;
            const filter = (r === 0 && c === 1) || (r === 1 && c === 0);
            const on = r === 5 && c === 3;
            return (
              <Cell key={n} $pivot={head ? "head" : "body"} $left={c === 0 || r < 2} $edge={r === 1 || r === 8} $on={on}>
                {filter ? <WithFilter>{text}<FilterButton aria-label={`Filter ${text}`}><Caret w={10} h={8} c="#555" /></FilterButton></WithFilter> : text}
                {on && <Handle />}
              </Cell>
            );
          })}
        </tr>
      ))}
    </tbody>
  </Grid>
);

const SelectBox = ({ w, value, label }: { w: number; value: string; label: string }) => (
  <Combo $w={w}><select aria-label={label} defaultValue={value}><option>{value}</option></select><Caret /></Combo>
);

export default function App() {
  return (
    <Page>
      <Global />
      <Banner>The worksheet becomes active</Banner>
      <TitleBar>
        <Quick>
          <IconButton $w={28} aria-label="Excel"><ExcelLogo w={25} h={28} /></IconButton>
          <IconButton $w={60} aria-label="Save"><SaveIcon /></IconButton>
          <IconButton $w={28} aria-label="Undo"><UndoIcon c="#3a78b8" /></IconButton>
          <IconButton $w={20} aria-label="Undo list"><Caret /></IconButton>
          <IconButton $w={44} aria-label="Redo"><UndoIcon c="#b5b5b5" flip /></IconButton>
          <IconButton $w={12} aria-label="Redo list"><Caret c="#c8c8c8" /></IconButton>
          <IconButton $w={42} aria-label="Customize"><Ic w={8} h={12}><path d="M0 1h8" stroke={GRAY} strokeWidth="2" /><path d="M0 6h8l-4 6z" fill={GRAY} /></Ic></IconButton>
        </Quick>
        <DocTitle>pivot_table_example1.xlsx - Excel</DocTitle>
        <ToolsLabel>PIVOTTABLE TOOLS</ToolsLabel>
        <WinButtons>
          <IconButton $w={20} aria-label="Help"><Ic w={12} h={18}><path d="M2 6V2h8v5L6 9v4M6 15v3" stroke="#777" strokeWidth="3" /></Ic></IconButton>
          <IconButton $w={28} aria-label="Ribbon options"><Ic w={20} h={18}><path d="M1 1h18v16H1zM1 5h18" stroke="#777" strokeWidth="1.600" /><path d="M10 16V8M6 11l4-4 4 4" stroke="#777" strokeWidth="1.600" /></Ic></IconButton>
          <IconButton $w={20} aria-label="Minimize"><Ic w={14} h={12}><path d="M0 10h14" stroke="#777" strokeWidth="4" /></Ic></IconButton>
          <IconButton $w={30} aria-label="Restore"><Ic w={16} h={18}><path d="M5 5V1h10v11h-4M1 6h10v11H1zM1 8h10M5 2h10" stroke="#777" strokeWidth="1.800" /></Ic></IconButton>
          <IconButton $w={20} aria-label="Close"><Cross c="#777" /></IconButton>
        </WinButtons>
      </TitleBar>
      <TabRow>
        <Tab $w={88} $kind="file">FILE</Tab>
        <Tab $w={92} $kind="on">HOME</Tab>
        <Tab $w={101}>INSERT</Tab><Tab $w={159}>PAGE LAYOUT</Tab><Tab $w={136}>FORMULAS</Tab><Tab $w={90}>DATA</Tab>
        <Tab $w={103}>REVIEW</Tab><Tab $w={85}>VIEW</Tab>
        <Rule as="i" $w={4} style={{ visibility: "hidden" }} />
        <Tab $w={116} $kind="tool">ANALYZE</Tab><Tab $w={104} $kind="tool">DESIGN</Tab>
        <SignIn href="#signin">Sign in</SignIn>
      </TabRow>

      <Ribbon>
        <Group $w={237}>
          <GroupBody $pad={3}>
            <Big $w={68}><PasteIcon /><span>Paste</span><span><Caret /></span></Big>
            <Stack $w={150}>
              <Line><CutIcon />Cut</Line><Line $gap={9}><CopyIcon />Copy<Caret /></Line><Line><BrushIcon />Format Painter</Line>
            </Stack>
          </GroupBody>
          <GroupName $launch>Clipboard<Launcher /></GroupName>
        </Group>
        <Group $w={311}>
          <GroupBody>
            <Rows>
              <ToolRow>
                <SelectBox w={167} value="Calibri" label="Font" /><SelectBox w={65} value="11" label="Font size" />
                <Tool $w={36} aria-label="Grow font"><SizeIcon /></Tool><Tool $w={33} aria-label="Shrink font"><SizeIcon down /></Tool>
              </ToolRow>
              <ToolRow>
                <Tool $w={32}><b>B</b></Tool><Tool $w={33}><i><b>I</b></i></Tool><Tool $w={33}><b><u>U</u></b></Tool><Tool $w={18}><Caret /></Tool>
                <Rule $w={15} /><Tool $w={30}><BordersIcon /></Tool><Tool $w={20}><Caret /></Tool>
                <Rule $w={12} /><Tool $w={36}><BucketIcon /></Tool><Tool $w={14}><Caret /></Tool><Tool $w={38}><FontColor /></Tool><Tool $w={14}><Caret /></Tool>
              </ToolRow>
            </Rows>
          </GroupBody>
          <GroupName $launch>Font<Launcher /></GroupName>
        </Group>
        <Group $w={395}>
          <GroupBody>
            <Rows $w={191} $rule>
              <ToolRow>
                <Tool $w={33}><Ic w={20} h={24}>{bars([[0, 1, 20], [3, 7, 14], [0, 13, 20]])}</Ic></Tool>
                <Tool $w={33}><Ic w={20} h={24}>{bars([[0, 6, 20], [3, 12, 14], [0, 18, 20]])}</Ic></Tool>
                <Tool $w={33} $on><Ic w={20} h={28}>{bars([[0, 15, 20], [3, 21, 14], [0, 27, 20]])}</Ic></Tool>
                <Rule $w={10} /><Tool $w={36}><AngleIcon /></Tool><Tool $w={12}><Caret /></Tool>
              </ToolRow>
              <ToolRow>
                <Tool $w={33}><Ic w={20} h={18}>{bars([[0, 1, 20], [0, 6, 14], [0, 11, 20], [0, 16, 14]])}</Ic></Tool>
                <Tool $w={33}><Ic w={20} h={18}>{bars([[0, 1, 20], [3, 6, 14], [0, 11, 20], [3, 16, 14]])}</Ic></Tool>
                <Tool $w={33}><Ic w={20} h={18}>{bars([[0, 1, 20], [6, 6, 14], [0, 11, 20], [6, 16, 14]])}</Ic></Tool>
                <Rule $w={10} /><Tool $w={36}><IndentIcon /></Tool><Tool $w={32}><IndentIcon right /></Tool>
              </ToolRow>
            </Rows>
            <Rows>
              <Line $pad={11}><WrapIcon />Wrap Text</Line>
              <Line $pad={11} $gap={14}><MergeIcon />Merge &amp; Center<Caret /></Line>
            </Rows>
          </GroupBody>
          <GroupName $launch>Alignment<Launcher /></GroupName>
        </Group>
        <Group $w={210}>
          <GroupBody>
            <Rows>
              <ToolRow><SelectBox w={196} value="Percentage" label="Number format" /></ToolRow>
              <ToolRow>
                <Tool $w={34}><MoneyIcon /></Tool><Tool $w={14}><Caret /></Tool><Tool $w={38}>%</Tool><Tool $w={28} aria-label="Comma style"><Ic w={8} h={14}><path d="M0 4a4 4 0 0 1 8 0q0 7-6 10l-1-1q3-3 3-5-4 0-4-4z" fill="#555" /></Ic></Tool>
                <Rule $w={16} /><Tool $w={32}><Decimal more /></Tool><Tool $w={36}><Decimal /></Tool>
              </ToolRow>
            </Rows>
          </GroupBody>
          <GroupName $launch>Number<Launcher /></GroupName>
        </Group>
        <Group $w={271}>
          <GroupBody $pad={10}>
            <Big $w={100}><CondIcon /><span>Conditional</span><span>Formatting<Caret /></span></Big>
            <Big $w={84}><TableIcon /><span>Format as</span><span>Table<Caret /></span></Big>
            <Big $w={62}><StyleIcon /><span>Cell</span><span>Styles<Caret /></span></Big>
          </GroupBody>
          <GroupName>Styles</GroupName>
        </Group>
        <Group $w={205}>
          <GroupBody $pad={8}>
            <Big $w={56}><InsertIcon /><span>Insert</span><span><Caret /></span></Big>
            <Big $w={64}><DeleteIcon /><span>Delete</span><span><Caret /></span></Big>
            <Big $w={58}><FormatIcon /><span>Format</span><span><Caret /></span></Big>
          </GroupBody>
          <GroupName>Cells</GroupName>
        </Group>
        <Group $w={280}>
          <GroupBody $pad={11}>
            <Stack $w={134}>
              <Line $gap={10}><SigmaIcon />AutoSum<Caret /></Line><Line><FillIcon />Fill<Caret /></Line><Line><ClearIcon />Clear<Caret /></Line>
            </Stack>
            <Big $w={60}><SortIcon /><span>Sort &amp;</span><span>Filter<Caret /></span></Big>
            <Big $w={62}><FindIcon /><span>Find &amp;</span><span>Select<Caret /></span></Big>
          </GroupBody>
          <GroupName>Editing</GroupName>
        </Group>
        <Collapse aria-label="Collapse ribbon"><Ic w={14} h={12}><path d="M1 11l6-8 6 8" stroke="#666" strokeWidth="3" /></Ic></Collapse>
      </Ribbon>

      <FormulaBar>
        <NameBox><input aria-label="Name box" defaultValue="D6" /><Caret w={12} h={8} /></NameBox>
        <Dots><Ic w={3} h={20}><path d="M1.500 0v20" stroke="#999" strokeWidth="2" strokeDasharray="2 4" /></Ic></Dots>
        <FxBox>
          <button aria-label="Cancel"><Cross c="#c4c4c4" s={26} h={28} t={2} /></button>
          <button aria-label="Enter"><Ic w={28} h={28}><path d="M2 16l8 9L26 2" stroke="#c4c4c4" strokeWidth="4" /></Ic></button>
          <button aria-label="Insert function"><FxMark>fx</FxMark></button>
        </FxBox>
        <Formula><input aria-label="Formula" defaultValue="12.625%" /><Ic w={16} h={12}><path d="M1 2l7 8 7-8" stroke="#666" strokeWidth="3.400" /></Ic></Formula>
      </FormulaBar>

      <Work>
        <Left>
          <SheetRow>
            <Sheet><SheetGrid /><Chart /></Sheet>
            <VScroll>
              <ScrollButton aria-label="Scroll up"><Ic w={10} h={7}><path d="M0 7l5-7 5 7z" fill={GRAY} /></Ic></ScrollButton>
              <VThumb /><VRest />
              <ScrollButton aria-label="Scroll down"><Caret w={10} h={7} /></ScrollButton>
            </VScroll>
          </SheetRow>
          <SheetTabs>
            <NavButton $w={64} $pad={22} aria-label="Previous sheets"><Ic w={8} h={12}><path d="M8 0v12L0 6z" fill={GREEN} /></Ic></NavButton>
            <NavButton $w={42} aria-label="Next sheets"><Ic w={8} h={12}><path d="M0 0v12l8-6z" fill="#c6c6c6" /></Ic></NavButton>
            <SheetTab $w={46}><b>...</b></SheetTab>
            <SheetTab $w={209}>votes cast by party</SheetTab>
            <SheetTab $w={132}>dashboard</SheetTab>
            <SheetTab $w={214} $on>votes cast by %age</SheetTab>
            <SheetTab $w={94} $bold>Voters</SheetTab>
            <NavButton $w={122} aria-label="New sheet"><Ic w={26} h={28}><ellipse cx="13" cy="14" rx="11.500" ry="13" stroke={GRAY} strokeWidth="1.500" /><path d="M7 14h12M13 7v14" stroke="#666" strokeWidth="2.600" /></Ic></NavButton>
            <NavButton $w={97} $pad={48} aria-label="Resize tabs"><Ic w={3} h={20}><path d="M1.500 0v20" stroke="#999" strokeWidth="2" strokeDasharray="2 4" /></Ic></NavButton>
            <HScroll>
              <ScrollButton aria-label="Scroll left"><Ic w={7} h={12}><path d="M7 0v12L0 6z" fill={GRAY} /></Ic></ScrollButton>
              <HThumb /><HRest />
              <ScrollButton aria-label="Scroll right"><Ic w={7} h={12}><path d="M0 0v12l7-6z" fill={GRAY} /></Ic></ScrollButton>
            </HScroll>
          </SheetTabs>
        </Left>
        <Pane>
          <PaneHead><h2>PivotTable Fields</h2><Caret w={14} h={9} /><Cross c="#666" s={15} h={17} /></PaneHead>
          <PaneLine>Choose fields to add to report:<GearButton aria-label="Tools"><GearIcon /><Caret w={11} h={7} /></GearButton></PaneLine>
          <Fields>{FIELDS.map(([n, on]) => <Check key={n} $bold={on}><input type="checkbox" defaultChecked={on} />{n}</Check>)}</Fields>
          <More href="#more">MORE TABLES...</More>
          <Drag>Drag fields between areas below:</Drag>
          <Areas>
            <Area $r $b><AreaName><Ic w={17} h={20}><path d="M0 0h17v3l-6 7v10H6V10L0 3z" fill="#999" /></Ic>FILTERS</AreaName></Area>
            <Area $b>
              <AreaName><Ic w={16} h={18}><path d="M0 0h5v18H0zM7 0h1.500v18H7zM11 0h1.500v18H11zM14.500 0H16v18h-1.500z" fill="#999" /></Ic>COLUMNS</AreaName>
              <Pill>PARTY<Caret c="#000" w={12} h={8} /></Pill>
            </Area>
            <Area $r>
              <AreaName><Ic w={16} h={17}><path d="M0 0h16v5H0zM0 7h16v1.500H0zM0 11h16v1.500H0zM0 15h16v1.500H0z" fill="#999" /></Ic>ROWS</AreaName>
              <Pill>AGE GROUP<Caret c="#000" w={12} h={8} /></Pill>
            </Area>
            <Area>
              <AreaName><SigmaIcon w={14} h={17} c="#888" />VALUES</AreaName>
              <Pill>Count of VOT...<Caret c="#000" w={12} h={8} /></Pill>
            </Area>
          </Areas>
          <PaneFoot><Check><input type="checkbox" />Defer Layout Update</Check><Update disabled>UPDATE</Update></PaneFoot>
        </Pane>
      </Work>

      <Status>
        READY
        <Views>
          <View $on aria-label="Normal"><Ic w={20} h={24}><path d={gridPath(1, 1, 6, 7, 3, 3)} stroke="#e6f2ea" strokeWidth="2" /></Ic></View>
          <View aria-label="Page layout"><Ic w={22} h={24}><path d="M1 1h20v22H1zM5 5h12v14H5zM8 9h6M8 12h6M8 15h6" stroke="#e6f2ea" strokeWidth="1.800" /></Ic></View>
          <View aria-label="Page break"><Ic w={22} h={24}><path d="M1 1h20v22H1z" stroke="#e6f2ea" strokeWidth="1.800" /><path d="M1 1h5v14H1zM8 1h5v14H8z" fill="#e6f2ea" /></Ic></View>
        </Views>
        <Zoom>
          <Ic w={10} h={4}><path d="M0 0h10v4H0z" fill="#fff" /></Ic>
          <input type="range" aria-label="Zoom" defaultValue={50} />
          <Ic w={13} h={14}><path d="M0 7h13M6.500 0v14" stroke="#fff" strokeWidth="3" /></Ic>
        </Zoom>
        100 %
      </Status>

      <Taskbar>
        <Start aria-label="Start"><StartOrb /></Start>
        <TaskButton aria-label="Internet Explorer"><IeIcon /></TaskButton>
        <TaskButton $run $hot $pile aria-label="Explorer"><FolderIcon /></TaskButton>
        <TaskButton aria-label="Media Player"><PlayIcon /></TaskButton>
        <TaskButton aria-label="Messenger"><PersonIcon /></TaskButton>
        <TaskButton aria-label="Word"><WordIcon /></TaskButton>
        <TaskButton aria-label="Utility"><RedIcon /></TaskButton>
        <TaskButton $run aria-label="Notepad"><NoteIcon /></TaskButton>
        <TaskButton $run aria-label="Chrome"><ChromeIcon /></TaskButton>
        <TaskButton $run aria-label="Recorder"><PlusApp /></TaskButton>
        <TaskButton $run aria-label="Paint"><PaintIcon /></TaskButton>
        <TaskButton $run $hot aria-label="Excel"><ExcelLogo w={44} h={52} /></TaskButton>
        <TaskButton $run $pile aria-label="Photos"><PhotoIcon /></TaskButton>
        <Tray>
          <Ic w={12} h={10}><path d="M0 9l6-8 6 8z" fill="#fff" stroke="#566" /></Ic>
          <Ic w={26} h={30}><path d="M3 9h4l7-8v26l-7-8H3z" fill="#fff" stroke="#445" /><ellipse cx="18" cy="20" rx="6" ry="7.500" fill="#fff" stroke="#d8121a" strokeWidth="3" /><path d="M14 15l8 10" stroke="#d8121a" strokeWidth="3" /></Ic>
          <Ic w={24} h={28}><path d="M1 4l9-1.500V13H1zM12 2l11-2v13H12zM1 15h9v10.500L1 24zM12 15h11v12.500L12 26z" fill="#fff" stroke="#445" strokeWidth=".7" /></Ic>
          <Ic w={24} h={28}><path d="M7 4h15v17H7z" fill="#8a98a8" stroke="#fff" strokeWidth="2" /><path d="M1 0v9h7V0M4.500 9v18M1 24h8" stroke="#fff" strokeWidth="2" /><path d="M17 12l7 15H10z" fill="#f7cf1d" stroke="#8a7410" strokeWidth=".8" /><path d="M17 17v5M17 23v2" stroke="#222" strokeWidth="1.800" /></Ic>
          <Ic w={24} h={28}><path d="M6 1l6 5-6 5-6-5zM18 1l6 5-6 5-6-5zM6 11l6 5-6 5-6-5zM18 11l6 5-6 5-6-5zM12 18l6 5-6 5-6-5z" fill="#fff" stroke="#445" strokeWidth=".8" /></Ic>
          <Clock>10:46 PM<br />03/20/2016</Clock>
          <Peek aria-label="Show desktop" />
        </Tray>
      </Taskbar>
    </Page>
  );
}
